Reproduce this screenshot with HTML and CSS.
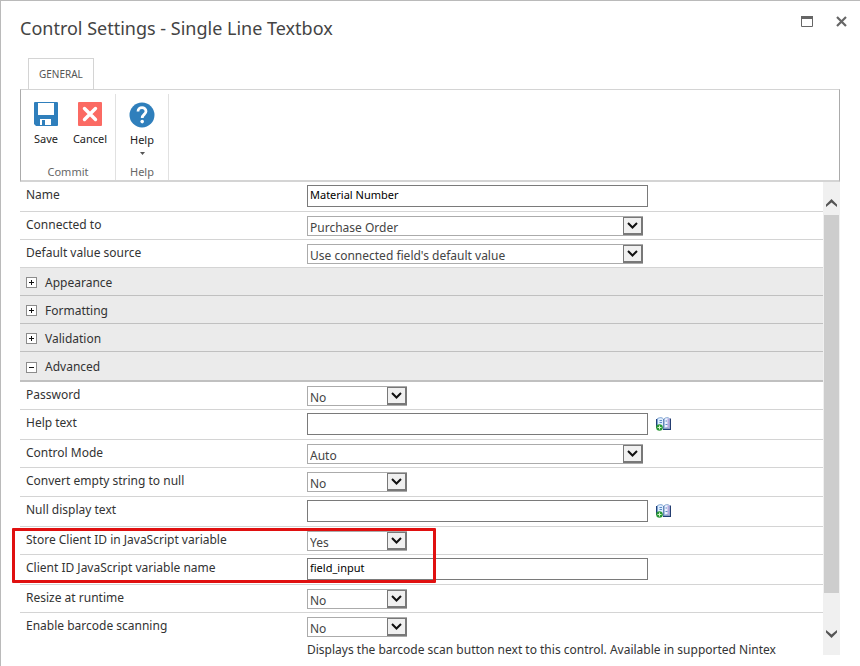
FILE: index.html
```html
<!DOCTYPE html>
<html lang="en">
<head>
<meta charset="utf-8">
<meta name="viewport" content="width=device-width, initial-scale=1">
<title>Control Settings - Single Line Textbox</title>
<link rel="stylesheet" href="styles.css">
</head>
<body>
<svg class="defs" aria-hidden="true">
  <symbol id="chevron" viewBox="0 0 20 18">
    <rect width="20" height="18" fill="#787878"/>
    <rect x="1" y="1" width="17" height="15" fill="#f0f0f0"/>
    <path d="M5 6l4.500 4.500L14 6" fill="none" stroke="#111" stroke-width="2"/>
  </symbol>
  <symbol id="plus" viewBox="0 0 11 11">
    <rect x=".5" y=".5" width="10" height="10" fill="#fff" stroke="#8c8c8c"/>
    <path d="M3 5.500h5M5.500 3v5" stroke="#111"/>
  </symbol>
  <symbol id="minus" viewBox="0 0 11 11">
    <rect x=".5" y=".5" width="10" height="10" fill="#fff" stroke="#8c8c8c"/>
    <path d="M3 5.500h5" stroke="#111"/>
  </symbol>
  <symbol id="book" viewBox="0 0 16 14">
    <path d="M0 2h1.500v9H0zM7 11.500h8V13H7z" fill="#1f3f78"/>
    <path d="M1.500 1.500C4 .3 6 .3 7.500 2v9.500C6 10.500 4 10.300 1.500 11z" fill="#dfeeff" stroke="#7fa3d0"/>
    <path d="M8 2C9.500 .3 12 .3 13.500 1.500v9.500c-2-.7-4-.5-5.500 .7z" fill="#eef2ff" stroke="#7fa3d0"/>
    <path d="M11.500 1.500h2v9.500h-2z" fill="#b9a9dc"/>
    <path d="M3.500 3.500h2.500M3.500 5.500h2.500M9.500 4h1.500M9.500 7.500h2" stroke="#5b8cc6"/>
    <path d="M7.700 2v10" stroke="#5577a8" stroke-width=".8"/>
    <path d="M14.500 1.500v11" stroke="#243d70"/>
    <circle cx="3.500" cy="10.500" r="3.300" fill="#2a9836"/>
    <path d="M3.500 8.500v4M1.500 10.500h4" stroke="#d7f5ce"/>
  </symbol>
</svg>

<main class="dialog">
  <header class="titlebar">
    <h1>Control Settings - Single Line Textbox</h1>
    <div class="window-buttons">
      <button type="button" aria-label="Maximize"><svg width="12" height="11" viewBox="0 0 12 11"><path d="M.5.500h11v10H.5z" fill="none" stroke="#666"/><path d="M0 0h12v3H0z" fill="#666"/></svg></button>
      <button type="button" aria-label="Close"><svg width="11" height="11" viewBox="0 0 11 11"><path d="M1 1l9 9M10 1l-9 9" stroke="#666" stroke-width="2.200"/></svg></button>
    </div>
  </header>

  <nav class="tabs"><a href="#general">General</a></nav>

  <section class="ribbon" id="general">
    <div class="group">
      <div class="commands">
        <button type="button">
          <svg width="24" height="24" viewBox="0 0 24 24"><path d="M1 0h22q1 0 1 1v22q0 1-1 1H2l-2-2V1q0-1 1-1z" fill="#2f7fbc"/><path d="M4 1h16v12H4zM6 17h11v6H6z" fill="#fff"/><path d="M8 18h3v5H8z" fill="#2f7fbc"/></svg>
          Save
        </button>
        <button type="button">
          <svg width="24" height="24" viewBox="0 0 24 24"><rect width="24" height="24" rx="1" fill="#fb6a63"/><path d="M6.500 6.500l11 11M17.500 6.500l-11 11" stroke="#fff" stroke-width="3.400" stroke-linecap="round"/></svg>
          Cancel
        </button>
      </div>
      <span class="caption">Commit</span>
    </div>
    <div class="group">
      <div class="commands">
        <button type="button">
          <svg width="26" height="26" viewBox="0 0 26 26"><circle cx="13" cy="13" r="12.500" fill="#2f7fbc"/><path d="M9 9.500C9 4.500 17 4.500 17 9.300c0 3-3.800 3.200-3.800 6.700" fill="none" stroke="#fff" stroke-width="2.800"/><circle cx="13.200" cy="19.600" r="1.800" fill="#fff"/></svg>
          Help
          <svg class="caret" width="5" height="3" viewBox="0 0 5 3"><path d="M0 0h5L2.500 3z" fill="#555"/></svg>
        </button>
      </div>
      <span class="caption">Help</span>
    </div>
  </section>

  <div class="panel">
    <form class="settings">
      <div class="row text-row">
        <label for="name">Name</label>
        <div class="field"><input id="name" type="text" value="Material Number"></div>
      </div>
      <div class="row">
        <label for="connected">Connected to</label>
        <div class="field"><span class="select wide"><select id="connected"><option>Purchase Order</option></select><svg aria-hidden="true"><use href="#chevron"/></svg></span></div>
      </div>
      <div class="row">
        <label for="source">Default value source</label>
        <div class="field"><span class="select wide"><select id="source"><option>Use connected field's default value</option></select><svg aria-hidden="true"><use href="#chevron"/></svg></span></div>
      </div>

      <button type="button" class="section" aria-expanded="false"><svg aria-hidden="true"><use href="#plus"/></svg>Appearance</button>
      <button type="button" class="section" aria-expanded="false"><svg aria-hidden="true"><use href="#plus"/></svg>Formatting</button>
      <button type="button" class="section" aria-expanded="false"><svg aria-hidden="true"><use href="#plus"/></svg>Validation</button>
      <button type="button" class="section open" aria-expanded="true"><svg aria-hidden="true"><use href="#minus"/></svg>Advanced</button>

      <div class="row">
        <label for="password">Password</label>
        <div class="field"><span class="select"><select id="password"><option>No</option><option>Yes</option></select><svg aria-hidden="true"><use href="#chevron"/></svg></span></div>
      </div>
      <div class="row text-row">
        <label for="helptext">Help text</label>
        <div class="field"><input id="helptext" type="text"><button type="button" class="lookup" aria-label="Insert reference"><svg><use href="#book"/></svg></button></div>
      </div>
      <div class="row">
        <label for="mode">Control Mode</label>
        <div class="field"><span class="select wide"><select id="mode"><option>Auto</option></select><svg aria-hidden="true"><use href="#chevron"/></svg></span></div>
      </div>
      <div class="row roomy">
        <label for="convert">Convert empty string to null</label>
        <div class="field"><span class="select"><select id="convert"><option>No</option><option>Yes</option></select><svg aria-hidden="true"><use href="#chevron"/></svg></span></div>
      </div>
      <div class="row text-row">
        <label for="nulltext">Null display text</label>
        <div class="field"><input id="nulltext" type="text"><button type="button" class="lookup" aria-label="Insert reference"><svg><use href="#book"/></svg></button></div>
      </div>
      <div class="highlighted">
        <div class="row">
          <label for="store">Store Client ID in JavaScript variable</label>
          <div class="field"><span class="select"><select id="store"><option>Yes</option><option>No</option></select><svg aria-hidden="true"><use href="#chevron"/></svg></span></div>
        </div>
        <div class="row text-row">
          <label for="variable">Client ID JavaScript variable name</label>
          <div class="field"><input id="variable" type="text" value="field_input"></div>
        </div>
      </div>
      <div class="row">
        <label for="resize">Resize at runtime</label>
        <div class="field"><span class="select"><select id="resize"><option>No</option><option>Yes</option></select><svg aria-hidden="true"><use href="#chevron"/></svg></span></div>
      </div>
      <div class="row last">
        <label for="barcode">Enable barcode scanning</label>
        <div class="field"><span class="select"><select id="barcode"><option>No</option><option>Yes</option></select><svg aria-hidden="true"><use href="#chevron"/></svg></span>
          <p>Displays the barcode scan button next to this control. Available in supported Nintex</p></div>
      </div>
    </form>
    <div class="scrollbar" aria-hidden="true">
      <svg width="11" height="9" viewBox="0 0 11 9"><path d="M0 6.500L5.500 1 11 6.500V9L5.500 4.500 0 9z" fill="#555"/></svg>
      <div class="track"><div class="thumb"></div></div>
      <svg width="11" height="9" viewBox="0 0 11 9"><path d="M0 2.500L5.500 8 11 2.500V0L5.500 4.500 0 0z" fill="#555"/></svg>
    </div>
  </div>
</main>
</body>
</html>
```
FILE: styles.css
```css
* { box-sizing: border-box; }

body {
  margin: 0;
  background: #fff;
  color: #333;
  font: 12px/18px "Noto Sans", "Open Sans", sans-serif;
}

button, input, select { font: inherit; color: inherit; margin: 0; }
button { padding: 0; border: 0; background: none; cursor: pointer; }
svg { display: block; }
.defs { position: absolute; width: 0; height: 0; }

.dialog {
  display: flex;
  flex-direction: column;
  height: 100vh;
  padding-bottom: 11px;
  border-top: 1px solid #bababa;
  border-left: 1px solid #bababa;
}

.titlebar {
  display: flex;
  justify-content: space-between;
  align-items: flex-start;
  height: 57px;
  padding: 14px 13px 0 19px;
}
h1 {
  margin: 0;
  color: #444;
  font: 400 18px/26px "Noto Sans", "Open Sans", sans-serif;
}
.window-buttons { display: flex; align-items: center; gap: 23px; padding-top: 1px; }

.tabs { display: flex; padding-left: 27px; }
.tabs a {
  padding: 0 10px;
  border: 1px solid #d4d4d4;
  border-bottom: 0;
  color: #555;
  font-size: 10px;
  line-height: 30px;
  text-decoration: none;
  text-transform: uppercase;
}

.ribbon {
  display: flex;
  flex: none;
  height: 93px;
  margin: 0 20px 0 19px;
  padding-top: 4px;
  border: 1px solid #ababab;
  border-top-color: #d4d4d4;
  border-bottom: 2px solid #d4d4d4;
}
.group {
  display: flex;
  flex-direction: column;
  justify-content: space-between;
  align-items: center;
  padding: 8px 3px 0;
  border-right: 1px solid #e1e1e1;
}
.group + .group { padding-inline: 8px; }
.commands { display: flex; }
.commands button {
  display: flex;
  flex-direction: column;
  align-items: center;
  width: 44px;
  color: #222;
  font-size: 11px;
  line-height: 25px;
}
.group + .group button { width: 36px; line-height: 24px; }
.commands svg { flex: none; }
.caption { color: #666; font-size: 11px; line-height: 16px; }

.panel {
  display: flex;
  flex: 1;
  min-height: 0;
  margin-right: 20px;
}
.settings { flex: 1; min-width: 0; padding-left: 19px; overflow: clip; overflow-clip-margin: 6px; }

.row {
  display: grid;
  grid-template-columns: 281px minmax(0, 1fr);
  height: 28px;
  padding: 4px 0 0 6px;
  border-bottom: 1px solid #d4d4d4;
}
.row label { align-self: start; }
.roomy { height: 29px; }
.text-row { height: 30px; padding-top: 3px; }
.text-row label { padding-top: 1px; }
.last { height: auto; border: 0; }
.field { display: flex; flex-wrap: wrap; align-items: flex-start; }
.field p { width: 100%; margin: 4px 0 0; white-space: nowrap; }

.field input {
  width: 341px;
  height: 22px;
  padding: 0 2px 3px;
  border: 1px solid #7a7a7a;
  background: #fff;
  color: #000;
  font-size: 11px;
}
.lookup { margin: 4px 0 0 8px; }
.lookup svg { width: 16px; height: 14px; }

.select { position: relative; width: 100px; height: 20px; }
.select.wide { width: 336px; }
.select select {
  appearance: none;
  width: 100%;
  height: 20px;
  padding: 2px 20px 0 2px;
  border: 1px solid #ababab;
  border-radius: 0;
  background: #fff;
  color: #444;
}
.select svg {
  position: absolute;
  top: 1px;
  right: 0;
  width: 20px;
  height: 18px;
  pointer-events: none;
}

.section {
  display: flex;
  align-items: center;
  gap: 8px;
  width: 100%;
  height: 28px;
  padding: 2px 6px 0;
  border-bottom: 1px solid #c0c0c0;
  background: #ebebeb;
}
.section svg { width: 11px; height: 11px; }
.section.open { height: 30px; border-bottom-width: 2px; }

.highlighted { position: relative; }
.highlighted::after {
  content: "";
  position: absolute;
  inset: 1px 387px 2px -8px;
  border: 3px solid #e01010;
  border-radius: 1px;
  pointer-events: none;
}

.scrollbar {
  display: flex;
  flex-direction: column;
  align-items: center;
  width: 17px;
  padding: 16px 0;
  background: #f0f0f0;
}
.track { flex: 1; align-self: stretch; padding: 8px 1px 0; }
.thumb { height: 91%; background: #cdcdcd; }
```
